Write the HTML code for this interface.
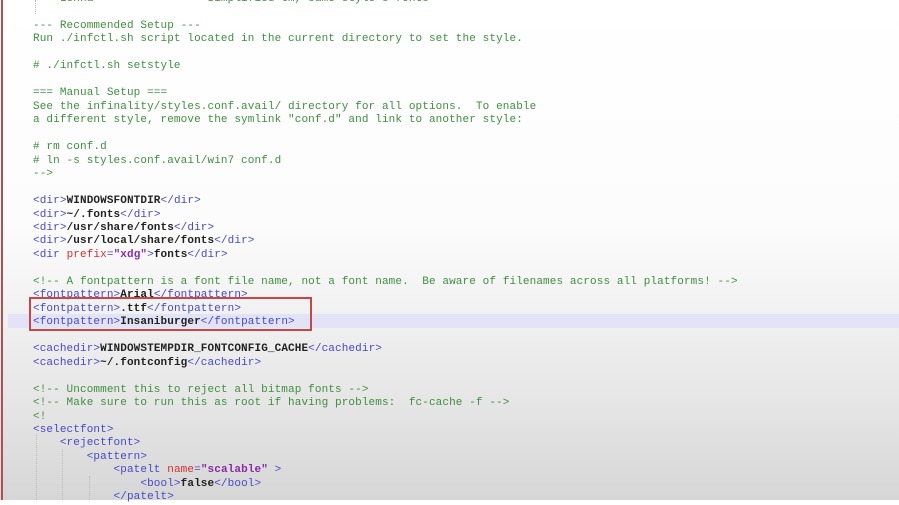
<!DOCTYPE html>
<html><head><meta charset="utf-8"><style>
html,body{margin:0;padding:0}
body{width:899px;height:500px;overflow:hidden;position:relative;background:linear-gradient(180deg,#ffffff 0%,#fcfcfc 45%,#e6e6e6 80%,#d6d6d6 100%);font-family:"Liberation Mono",monospace;font-size:11px}
.ed{position:absolute;left:33px;top:-7px;line-height:13.47px;white-space:pre;letter-spacing:0.11px}
.c{color:#3f8f3f}
.t{color:#4848c8}
.b{color:#222;font-weight:bold}
.a{color:#d03030}
.v{color:#8a2aa8;font-weight:bold}
.hl{position:absolute;left:8px;right:0;top:314px;height:13.5px;background:#e3e3f7}
.box{position:absolute;left:29px;top:297px;width:283px;height:34px;border:2px solid #c8454a;box-sizing:border-box}
.lb{position:absolute;left:1px;top:0;width:2px;height:500px;background:#b05050}
.g{position:absolute;width:0;border-left:1px dotted #bbb}
</style></head><body>
<div class="lb"></div>
<div class="hl"></div>
<div class="g" style="left:35px;top:0;height:14px"></div>
<div class="g" style="left:36px;top:435px;height:65px"></div>
<div class="g" style="left:62px;top:449px;height:51px"></div>
<div class="g" style="left:89px;top:476px;height:24px"></div>
<div class="ed"><span class="c">    Lenna                 Simplified tm, same style's fonts</span>

<span class="c">--- Recommended Setup ---</span>
<span class="c">Run ./infctl.sh script located in the current directory to set the style.</span>

<span class="c"># ./infctl.sh setstyle</span>

<span class="c">=== Manual Setup ===</span>
<span class="c">See the infinality/styles.conf.avail/ directory for all options.  To enable</span>
<span class="c">a different style, remove the symlink "conf.d" and link to another style:</span>

<span class="c"># rm conf.d</span>
<span class="c"># ln -s styles.conf.avail/win7 conf.d</span>
<span class="c">--&gt;</span>

<span class="t">&lt;dir&gt;</span><span class="b">WINDOWSFONTDIR</span><span class="t">&lt;/dir&gt;</span>
<span class="t">&lt;dir&gt;</span><span class="b">~/.fonts</span><span class="t">&lt;/dir&gt;</span>
<span class="t">&lt;dir&gt;</span><span class="b">/usr/share/fonts</span><span class="t">&lt;/dir&gt;</span>
<span class="t">&lt;dir&gt;</span><span class="b">/usr/local/share/fonts</span><span class="t">&lt;/dir&gt;</span>
<span class="t">&lt;dir </span><span class="a">prefix</span><span class="t">=</span><span class="v">"xdg"</span><span class="t">&gt;</span><span class="b">fonts</span><span class="t">&lt;/dir&gt;</span>

<span class="c">&lt;!-- A fontpattern is a font file name, not a font name.  Be aware of filenames across all platforms! --&gt;</span>
<span class="t">&lt;fontpattern&gt;</span><span class="b">Arial</span><span class="t">&lt;/fontpattern&gt;</span>
<span class="t">&lt;fontpattern&gt;</span><span class="b">.ttf</span><span class="t">&lt;/fontpattern&gt;</span>
<span class="t">&lt;fontpattern&gt;</span><span class="b">Insaniburger</span><span class="t">&lt;/fontpattern&gt;</span>

<span class="t">&lt;cachedir&gt;</span><span class="b">WINDOWSTEMPDIR_FONTCONFIG_CACHE</span><span class="t">&lt;/cachedir&gt;</span>
<span class="t">&lt;cachedir&gt;</span><span class="b">~/.fontconfig</span><span class="t">&lt;/cachedir&gt;</span>

<span class="c">&lt;!-- Uncomment this to reject all bitmap fonts --&gt;</span>
<span class="c">&lt;!-- Make sure to run this as root if having problems:  fc-cache -f --&gt;</span>
<span class="c">&lt;!</span>
<span class="t">&lt;selectfont&gt;</span>
<span class="t">    &lt;rejectfont&gt;</span>
<span class="t">        &lt;pattern&gt;</span>
<span class="t">            &lt;patelt </span><span class="a">name</span><span class="t">=</span><span class="v">"scalable"</span><span class="t"> &gt;</span>
<span class="t">                &lt;bool&gt;</span><span class="b">false</span><span class="t">&lt;/bool&gt;</span>
<span class="t">            &lt;/patelt&gt;</span>
</div>
<div class="box"></div>
</body></html>
